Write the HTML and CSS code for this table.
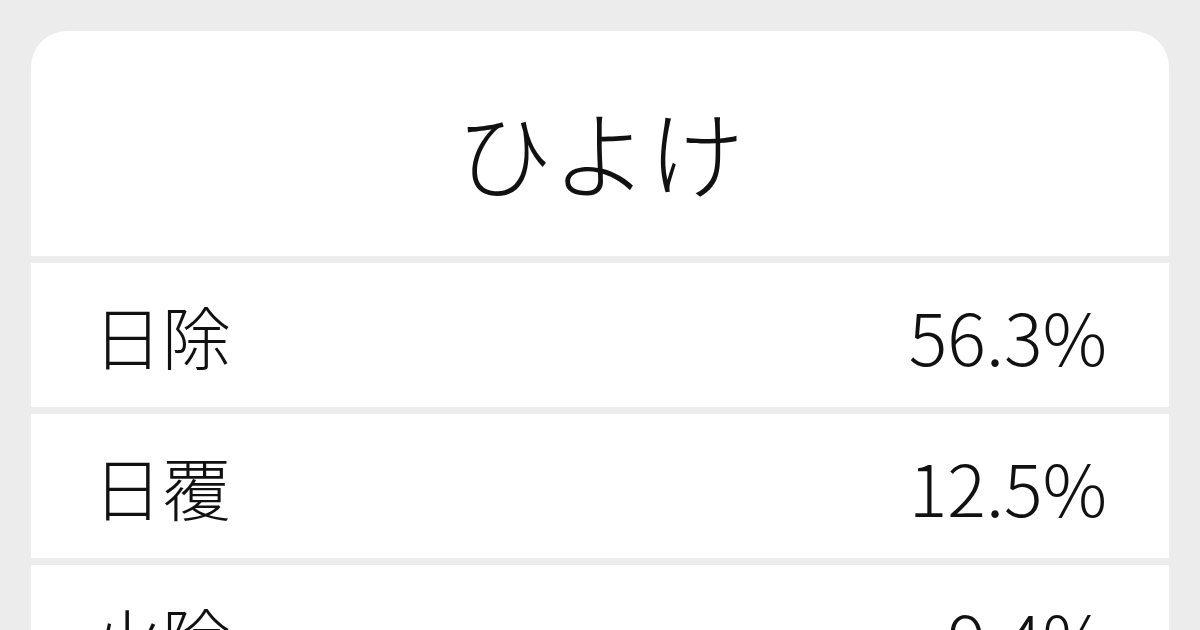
FILE: index.html
```html
<!DOCTYPE html>
<html lang="ja">
<head>
    <meta charset="UTF-8">
    <meta name="viewport" content="width=device-width, initial-scale=1.0">
    <title>ひよけ</title>
    <link rel="stylesheet" href="styles.css">
</head>
<body>

    <div class="card">
        <div class="titulo">
            <h1>ひよけ</h1>
        </div>
        <div class="fila">
            <span class="palabra">日除</span>
            <span class="valor">56.3%</span>
        </div>
        <div class="fila">
            <span class="palabra">日覆</span>
            <span class="valor">12.5%</span>
        </div>
        <div class="fila">
            <span class="palabra">火除</span>
            <span class="valor">9.4%</span>
        </div>
        <div class="fila">
            <span class="palabra">避け</span>
            <span class="valor">6.3%</span>
        </div>
    </div>

</body>
</html>
```

FILE: styles.css
```css
html, body {
    height: 100%;
}

body {
    font-family: "Noto Sans CJK JP", "Noto Sans", sans-serif;
    background-color: #ececec;
    color: #111111;
    margin: 0;
    padding: 31px 31px 0 31px;
    box-sizing: border-box;
    overflow: hidden;
}

.card {
    display: flex;
    flex-direction: column;
    gap: 7px;
    border-radius: 36px 36px 0 0;
    overflow: hidden;
}

.titulo {
    background-color: #ffffff;
    height: 225px;
    display: flex;
    align-items: center;
    justify-content: center;
    padding-top: 12px;
    box-sizing: border-box;
}

.titulo h1 {
    margin: 0;
    font-size: 96px;
    font-weight: 300;
    line-height: 1;
}

.fila {
    background-color: #ffffff;
    height: 144px;
    display: flex;
    align-items: center;
    justify-content: space-between;
    padding: 0 62px 0 62px;
    font-size: 72px;
    font-weight: 300;
    line-height: 1;
}

.palabra {
    font-size: 69px;
}
```
